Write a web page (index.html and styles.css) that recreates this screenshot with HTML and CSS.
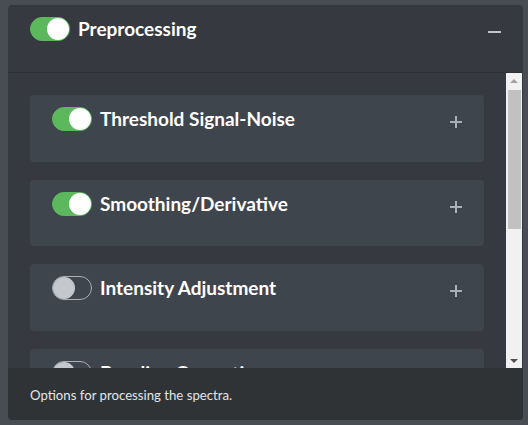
FILE: index.html
```html
<!DOCTYPE html>
<html>
<head>
<meta charset="utf-8">
<link rel="stylesheet" href="styles.css">
</head>
<body>
<div class="panel">
  <div class="panel-header">
    <span class="toggle on"><span class="knob"></span></span>
    <span class="panel-title">Preprocessing</span>
    <span class="minus"></span>
  </div>
  <div class="panel-body">
    <div class="scroll-content">
      <div class="card">
        <span class="toggle on"><span class="knob"></span></span>
        <span class="card-title">Threshold Signal-Noise</span>
        <span class="plus"></span>
      </div>
      <div class="card">
        <span class="toggle on"><span class="knob"></span></span>
        <span class="card-title">Smoothing/Derivative</span>
        <span class="plus"></span>
      </div>
      <div class="card">
        <span class="toggle"><span class="knob"></span></span>
        <span class="card-title">Intensity Adjustment</span>
        <span class="plus"></span>
      </div>
      <div class="card">
        <span class="toggle"><span class="knob"></span></span>
        <span class="card-title">Baseline Correction</span>
        <span class="plus"></span>
      </div>
    </div>
    <div class="scrollbar">
      <div class="sb-btn"><span class="arrow-up"></span></div>
      <div class="sb-track"><div class="sb-thumb"></div></div>
      <div class="sb-btn"><span class="arrow-down"></span></div>
    </div>
  </div>
  <div class="panel-footer">Options for processing the spectra.</div>
</div>
</body>
</html>
```
FILE: styles.css
```css
html, body {
  margin: 0;
  padding: 0;
}
body {
  background: #474d53;
  padding: 5px 5px 5px 8px;
  font-family: Lato, "Noto Sans", sans-serif;
  color: #ffffff;
}
.panel {
  width: 515px;
  height: 415px;
  background: #363a40;
  border-radius: 4px;
  display: flex;
  flex-direction: column;
  overflow: hidden;
}
.panel-header {
  height: 68px;
  flex: none;
  display: flex;
  align-items: flex-start;
  padding: 12px 22px 0 22px;
  box-sizing: border-box;
  border-bottom: 1px solid #2e3136;
  position: relative;
}
.panel-title {
  font-weight: 700;
  font-size: 19px;
  margin-left: 8px;
  line-height: 24px;
}
.minus {
  position: absolute;
  left: 480px;
  top: 26px;
  width: 13px;
  height: 2px;
  background: #c2c6cb;
}
.panel-body {
  flex: 1;
  min-height: 0;
  display: flex;
  padding-right: 1px;
}
.scroll-content {
  flex: 1;
  min-width: 0;
  overflow: hidden;
  padding: 22px 22px 0 22px;
  display: flex;
  flex-direction: column;
  gap: 18px;
}
.scrollbar {
  flex: none;
  width: 16px;
  background: #f1f1f1;
  display: flex;
  flex-direction: column;
}
.sb-btn {
  flex: none;
  height: 16px;
  display: flex;
  align-items: center;
  justify-content: center;
}
.arrow-up {
  width: 0;
  height: 0;
  border-left: 4px solid transparent;
  border-right: 4px solid transparent;
  border-bottom: 4px solid #a3a3a3;
  margin-top: -1px;
}
.arrow-down {
  width: 0;
  height: 0;
  border-left: 4px solid transparent;
  border-right: 4px solid transparent;
  border-top: 4px solid #505050;
  margin-top: 1px;
}
.sb-track {
  flex: 1;
  padding: 1px 1px 0 2px;
}
.sb-thumb {
  height: 139px;
  background: #c1c1c1;
}
.card {
  flex: none;
  height: 66.5px;
  background: #3f454c;
  border-radius: 4px;
  display: flex;
  align-items: flex-start;
  padding: 12px 22px 0 22px;
  box-sizing: border-box;
  position: relative;
}
.card-title {
  font-weight: 700;
  font-size: 19px;
  margin-left: 8px;
  line-height: 24px;
}
.plus {
  position: absolute;
  right: 22px;
  top: 21px;
  width: 12px;
  height: 12px;
}
.plus::before, .plus::after {
  content: "";
  position: absolute;
  background: #a9afb6;
}
.plus::before {
  left: 0; top: 5px; width: 12px; height: 2px;
}
.plus::after {
  left: 5px; top: 0; width: 2px; height: 12px;
}
.toggle {
  flex: none;
  width: 40px;
  height: 24px;
  border-radius: 12px;
  box-sizing: border-box;
  border: 1px solid #aab0b6;
  position: relative;
  background: transparent;
}
.toggle .knob {
  position: absolute;
  top: 0;
  left: 0;
  width: 22px;
  height: 22px;
  border-radius: 50%;
  background: #c4c8cc;
}
.toggle.on {
  background: #5cb85c;
  border-color: #5cb85c;
}
.toggle.on .knob {
  left: 16px;
  background: #ffffff;
}
.panel-footer {
  flex: none;
  height: 52px;
  background: #2f3336;
  color: #e2e5e8;
  font-size: 13.2px;
  padding: 19px 22px 0 22px;
  box-sizing: border-box;
  font-family: Lato, "Noto Sans", sans-serif;
}
```
